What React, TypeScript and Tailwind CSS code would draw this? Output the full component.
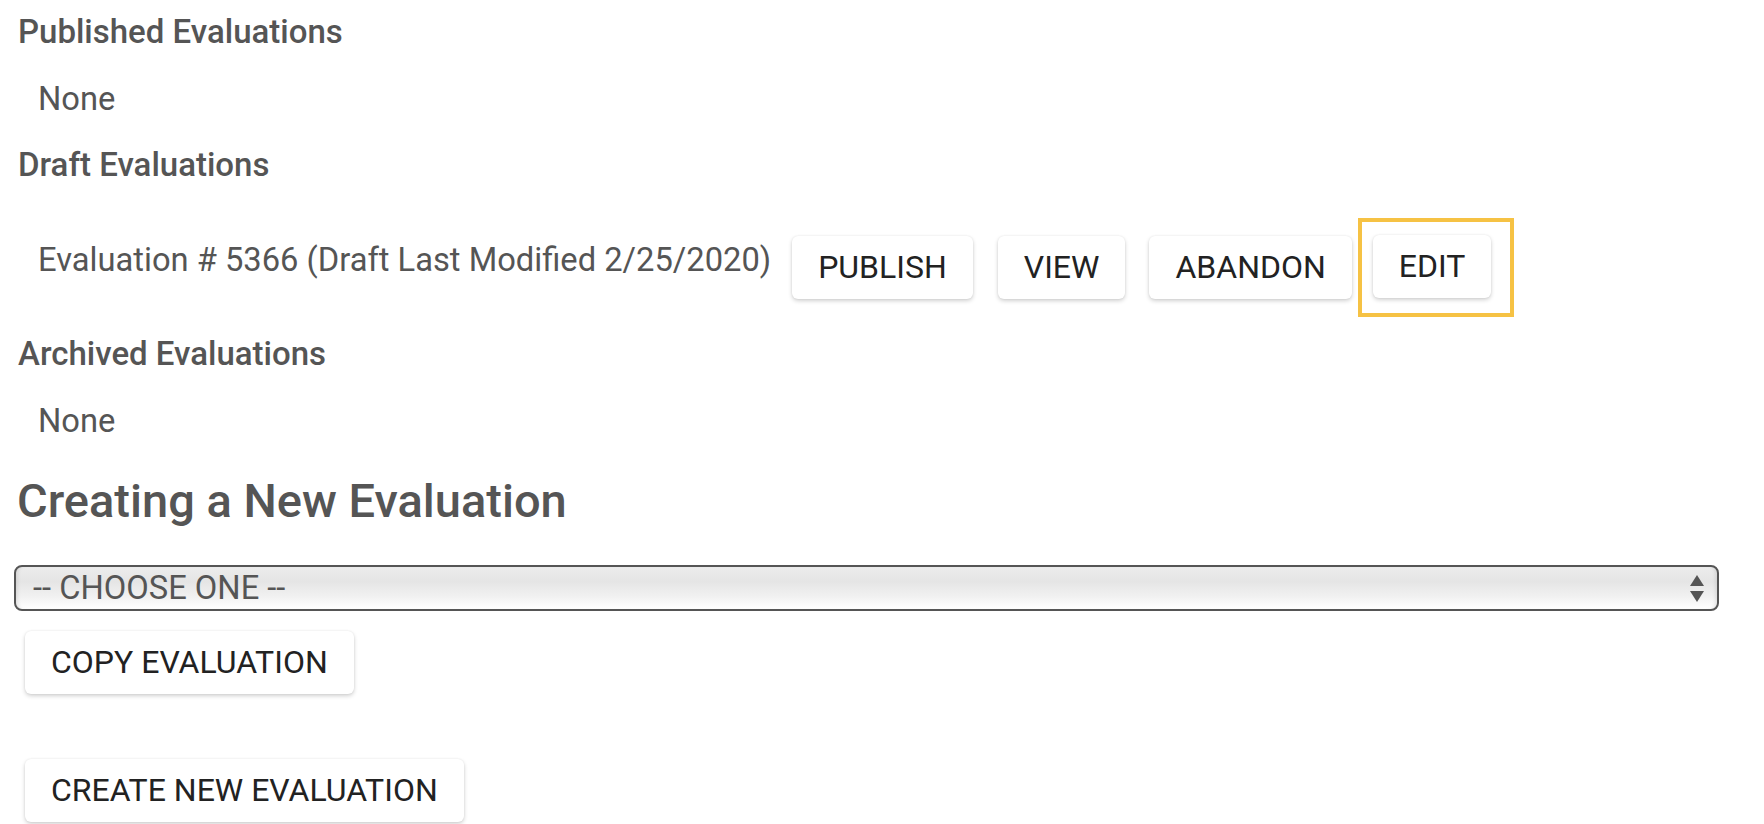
import React from "react";

const font = { fontFamily: "Roboto, 'Noto Sans', Arial, sans-serif" };

function ActionButton({ label }: { label: string }) {
  return (
    <button
      type="button"
      className="h-[63px] px-[26px] pb-[2px] bg-white rounded-[6px] text-[32px] leading-none text-[#222] uppercase shadow-[0_2px_4px_rgba(0,0,0,0.18),0_0_2px_rgba(0,0,0,0.08)] whitespace-nowrap"
    >
      {label}
    </button>
  );
}

export default function App() {
  return (
    <div className="w-[1764px] h-[824px] bg-white overflow-hidden text-[#555]" style={font}>
      <div className="pt-[10px]">
        {/* published */}
        <h4 className="pl-[18px] text-[33px] leading-[44px] font-medium">Published Evaluations</h4>
        <p className="mt-[23px] pl-[38px] text-[32.7px] leading-[44px]">None</p>

        {/* drafts */}
        <h4 className="mt-[22px] pl-[18px] text-[33px] leading-[44px] font-medium">Draft Evaluations</h4>
        <div className="mt-[31px] flex items-center h-[99px]">
          <span className="ml-[38px] mb-[15px] text-[32.7px] leading-[44px] whitespace-nowrap">
            Evaluation # 5366 (Draft Last Modified 2/25/2020)
          </span>
          <div className="ml-[21px]">
            <ActionButton label="Publish" />
          </div>
          <div className="ml-[25px]">
            <ActionButton label="View" />
          </div>
          <div className="ml-[24px]">
            <ActionButton label="Abandon" />
          </div>
          <div className="ml-[6px] border-4 border-[#f6c244] pl-[11px] pr-[19px] pt-[13px] pb-[15px]">
            <ActionButton label="Edit" />
          </div>
        </div>

        {/* archived */}
        <h4 className="mt-[15px] pl-[18px] text-[33px] leading-[44px] font-medium">Archived Evaluations</h4>
        <p className="mt-[23px] pl-[38px] text-[32.7px] leading-[44px]">None</p>

        {/* new */}
        <h2 className="mt-[28px] pl-[17px] text-[47px] leading-[60px] font-medium">Creating a New Evaluation</h2>
        <div className="relative mt-[34px] ml-[14px] w-[1705px]">
          <select
            defaultValue=""
            className="appearance-none w-full h-[46px] border-2 border-[#555] rounded-[8px] pl-[17px] text-[32.7px] leading-none text-[#555] bg-[linear-gradient(to_bottom,#ececec,#e5e5e5_35%,#f1f1f1_70%,#ffffff)] shadow-[inset_4px_0_4px_-3px_rgba(0,0,0,0.12),inset_-4px_0_4px_-3px_rgba(0,0,0,0.12)]"
            style={font}
          >
            <option value="">-- CHOOSE ONE --</option>
          </select>
          <svg
            className="absolute right-[15px] top-[10px] pointer-events-none"
            width="14"
            height="28"
            viewBox="0 0 14 28"
          >
            <path d="M7 0 L14 11 L0 11 Z" fill="#555" />
            <path d="M0 16 L14 16 L7 27 Z" fill="#555" />
          </svg>
        </div>
        <div className="mt-[20px] ml-[25px]">
          <ActionButton label="Copy Evaluation" />
        </div>
        <div className="mt-[65px] ml-[25px]">
          <ActionButton label="Create New Evaluation" />
        </div>
      </div>
    </div>
  );
}
